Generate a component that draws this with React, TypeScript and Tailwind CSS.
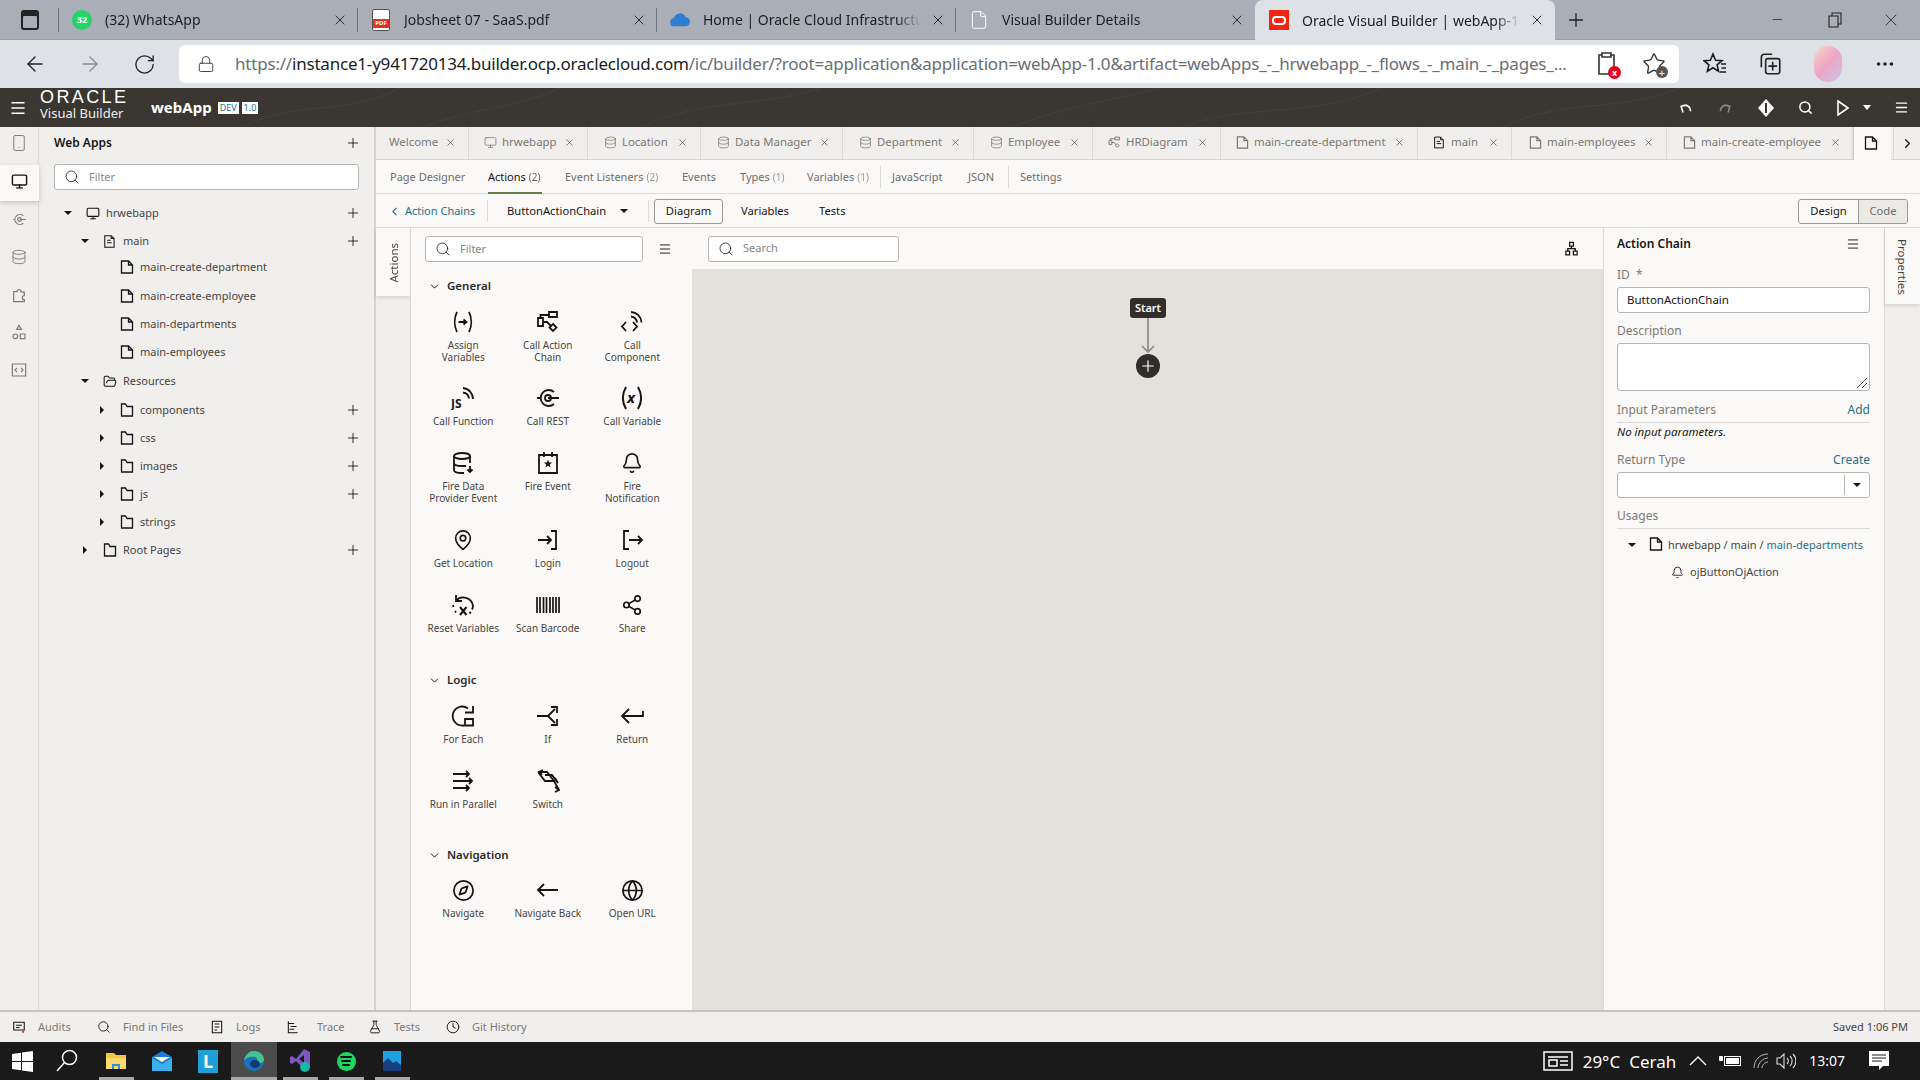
import type { ReactNode } from "react";
import {
  ArrowLeft,
  ArrowRight,
  Bell,
  ChevronDown,
  ChevronLeft,
  ChevronRight,
  Clock,
  Compass,
  Database,
  Ellipsis,
  File,
  FlaskConical,
  FolderOpen,
  Globe,
  Lock,
  MapPin,
  Menu,
  Minus,
  Monitor,
  Plus,
  RotateCw,
  Search,
  Share2,
  Smartphone,
  Star,
  X,
} from "lucide-react";

function Svg({ size = 24, children, className = "" }: { size?: number; children: ReactNode; className?: string }) {
  return (
    <svg
      width={size}
      height={size}
      viewBox="0 0 24 24"
      fill="none"
      stroke="currentColor"
      strokeWidth="1.8"
      className={className}
    >
      {children}
    </svg>
  );
}

function Caret({ dir = "down" }: { dir?: "down" | "right" }) {
  return dir === "down" ? (
    <span className="block h-0 w-0 border-x-[4px] border-t-[4px] border-x-transparent border-t-[#161513]" />
  ) : (
    <span className="block h-0 w-0 border-y-[4px] border-l-[4px] border-y-transparent border-l-[#161513]" />
  );
}

/* palette icons */
const AssignIcon = () => (
  <Svg>
    <path d="M6 2c-3 6-3 14 0 20M18 2c3 6 3 14 0 20M7.500 12h8M12.500 9.500l3 2.500-3 2.500" />
  </Svg>
);
const ChainIcon = () => (
  <Svg>
    <path d="M2 8h5v8H2zM13 2h8v5h-8zM7 5h6M4.500 8V5H7M7 12h4l4 4" />
    <path d="M17 14l3.500 3.500L17 21l-3.500-3.500z" />
  </Svg>
);
const ComponentIcon = () => (
  <Svg>
    <path d="M6 12l-4 4.500L6 21M13 12l4 4.500-4 4.500M11 2a11 11 0 0 1 10.500 10.500M11 6.500a7 7 0 0 1 6 6" />
  </Svg>
);
const FunctionIcon = () => (
  <Svg>
    <path d="M12 2a11 11 0 0 1 10 11M12 6.500a7 7 0 0 1 6 6" />
    <text x="0" y="22" fontSize="12" fontWeight="700" fill="currentColor" stroke="none" fontFamily="Noto Sans">
      JS
    </text>
  </Svg>
);
const RestIcon = () => (
  <Svg>
    <path d="M18 6a8 8 0 1 0 0 12M1 12h3M12 12h11" />
    <circle cx="12" cy="12" r="3" />
  </Svg>
);
const VariableIcon = () => (
  <Svg>
    <path d="M6 1c-4 7-4 15 0 22M18 1c4 7 4 15 0 22" strokeWidth="2" />
    <text x="7" y="17" fontSize="15" fontWeight="700" fontStyle="italic" fill="currentColor" stroke="none" fontFamily="Noto Sans">
      x
    </text>
  </Svg>
);
const DataEventIcon = () => (
  <Svg>
    <ellipse cx="11" cy="5" rx="8" ry="3" />
    <path d="M3 5v14c0 2 3 3 8 3h2M19 5v7M3 12c0 2 4 3 8 3h4M19 15v6M16.500 18.500l2.500 2.500 2.500-2.500" />
  </Svg>
);
const FireEventIcon = () => (
  <Svg>
    <path d="M3 4h18v18H3zM8 1v5M16 1v5" />
    <path d="M12 8.500l1.100 2.900 3 .2-2.300 1.900.8 3-2.600-1.700-2.600 1.700.8-3-2.300-1.900 3-.2z" fill="currentColor" stroke="none" />
  </Svg>
);
const LoginIcon = () => (
  <Svg>
    <path d="M15 3h5v18h-5M2 12h13M11 8l4 4-4 4" />
  </Svg>
);
const LogoutIcon = () => (
  <Svg>
    <path d="M9 3H4v18h5M9 12h13M18 8l4 4-4 4" />
  </Svg>
);
const ResetIcon = () => (
  <Svg>
    <path d="M5 2v6h6M5 7.500a10 10 0 0 1 17 5c0 2-.5 3-1 4M2 12l.5 2M4 18l1 1.500M20 19l-1.500 1.500" />
    <path d="M9 14l6.500 8M15.500 14L9 22" strokeWidth="2" />
  </Svg>
);
const BarcodeIcon = () => (
  <Svg>
    <path d="M1 4v16M4 4v16M7.500 4v16M10.500 4v16M14 4v16M17 4v16M20 4v16M23 4v16" strokeWidth="1.700" />
  </Svg>
);
const ForEachIcon = () => (
  <Svg>
    <path d="M17 4.500A9.500 9.500 0 1 0 12 21.500h1M14 8.500h8V2M14 15h8v6.500h-8z" />
  </Svg>
);
const IfIcon = () => (
  <Svg>
    <path d="M1 12h11M12 12l7-7M12 12l7 7M15 3h6v6M15 21h6v-6" />
  </Svg>
);
const ReturnIcon = () => (
  <Svg>
    <path d="M23 7v5H2M9 5l-7 7 7 7" />
  </Svg>
);
const ParallelIcon = () => (
  <Svg>
    <path d="M2 5h16M2 12h19M2 19h16M15 2l3 3-3 3M18 9l3 3-3 3M15 16l3 3-3 3" />
  </Svg>
);
const SwitchIcon = () => (
  <Svg>
    <path d="M2 3h9l7 9M7 1L3 3l3 3M2 3l7 9h9l5 9M9 6h7l6 8M19 18l4 3-4 2M19 9l3 5" />
  </Svg>
);
const BackIcon = () => (
  <Svg>
    <path d="M2 12h20M8 6l-6 6 6 6" />
  </Svg>
);

function TreeIcon({ size = 15 }: { size?: number }) {
  return (
    <Svg size={size} className="text-[#161513]">
      <path d="M9 2h6v6H9zM3 16h6v6H3zM15 16h6v6h-6zM12 8v4M6 16v-4h12v4" strokeWidth="2" />
    </Svg>
  );
}

function PageIcon({ size = 14, className = "" }: { size?: number; className?: string }) {
  return (
    <svg width={size} height={size} viewBox="0 0 14 14" fill="none" stroke="currentColor" strokeWidth="1.3" className={className}>
      <path d="M1.500 1h7l4 4v8h-11zM8.500 1v4h4" />
    </svg>
  );
}

function FolderIcon({ size = 14 }: { size?: number }) {
  return (
    <svg width={size} height={size} viewBox="0 0 14 14" fill="none" stroke="currentColor" strokeWidth="1.3">
      <path d="M1.500 1h4l1.500 2.500h5.500V13h-11z" />
    </svg>
  );
}

function DocIcon({ size = 14 }: { size?: number }) {
  return (
    <Svg size={size} className="text-[#161513]">
      <path d="M3 2h11l5 5v15H3zM14 2v5h5M7 10h6M7 14h8" />
    </Svg>
  );
}

/* browser top */
function BrowserTab({
  icon,
  title,
  active = false,
  last = false,
}: {
  icon: ReactNode;
  title: string;
  active?: boolean;
  last?: boolean;
}) {
  return (
    <div
      className={
        active
          ? "flex h-[40px] w-[300px] items-center rounded-t-lg bg-[#dee1e6] pl-[14px] pr-[10px]"
          : "relative flex h-[39px] w-[299px] items-center pl-[13px] pr-[10px]"
      }
    >
      <span className="flex w-[20px] shrink-0 justify-center">{icon}</span>
      <span className="ml-[13px] min-w-0 flex-1 overflow-hidden whitespace-nowrap text-[14px] text-[#1d1e20] [mask-image:linear-gradient(90deg,#000_88%,transparent)]">
        {title}
      </span>
      <X size={16} strokeWidth={1.4} className="ml-[8px] shrink-0 text-[#222]" />
      {!active && !last && <span className="absolute right-0 top-[8px] h-[24px] w-px bg-[#70747a]" />}
    </div>
  );
}

function BrowserChrome() {
  return (
    <>
      <div className="flex h-[40px] items-start border-b border-[#9a9ea5] bg-[#aaafb7]">
        <div className="relative flex h-[39px] w-[59px] items-center justify-center">
          <div className="h-[20px] w-[18px] rounded-[3px] border-2 border-[#222] bg-[#aaafb7] shadow-[inset_0_4px_0_#222]" />
          <span className="absolute right-0 top-[8px] h-[24px] w-px bg-[#70747a]" />
        </div>
        <BrowserTab
          title="(32) WhatsApp"
          icon={
            <span className="flex h-[20px] w-[20px] items-center justify-center rounded-full bg-[#25d366] text-[9px] font-bold text-white">
              32
            </span>
          }
        />
        <BrowserTab
          title="Jobsheet 07 - SaaS.pdf"
          icon={
            <span className="flex h-[22px] w-[18px] items-end justify-center rounded-[2px] border border-[#555] bg-white pb-[2px]">
              <span className="w-full bg-[#e0312b] text-center text-[6px] font-bold leading-[9px] text-white">PDF</span>
            </span>
          }
        />
        <BrowserTab
          title="Home | Oracle Cloud Infrastructure"
          icon={
            <svg width="22" height="16" viewBox="0 0 22 16">
              <path d="M5 15a4.500 4.500 0 0 1-.5-9A6.500 6.500 0 0 1 17 5a5 5 0 0 1 0 10z" fill="#2d7dd2" />
            </svg>
          }
        />
        <BrowserTab
          title="Visual Builder Details"
          last
          icon={<File size={22} strokeWidth={1.2} className="text-white" />}
        />
        <BrowserTab
          title="Oracle Visual Builder | webApp-1.0"
          active
          icon={
            <span className="flex h-[20px] w-[20px] items-center justify-center bg-[#f0260f]">
              <span className="h-[9px] w-[14px] rounded-[4px] border-2 border-white" />
            </span>
          }
        />
        <Plus size={22} strokeWidth={1.4} className="ml-[10px] mt-[9px] text-[#222]" />
        <div className="ml-auto flex h-[39px] items-center text-[#222]">
          <Minus size={15} strokeWidth={1.2} className="mr-[43px]" />
          <svg width="14" height="16" viewBox="0 0 14 16" fill="none" stroke="currentColor" strokeWidth="1.1" className="mr-[39px]">
            <path d="M1 4h9v11H1zM4 4V1h9v11h-3" />
          </svg>
          <X size={20} strokeWidth={1} className="mr-[19px]" />
        </div>
      </div>
      <div className="flex h-[48px] items-center bg-[#dee1e6]">
        <ArrowLeft size={24} strokeWidth={1.4} className="ml-[23px] text-[#222]" />
        <ArrowRight size={24} strokeWidth={1.4} className="ml-[31px] text-[#8a8c90]" />
        <RotateCw size={23} strokeWidth={1.4} className="ml-[31px] text-[#222]" />
        <div className="ml-[23px] flex h-[38px] w-[1500px] items-center rounded-md bg-white pl-[18px]">
          <Lock size={18} strokeWidth={1.3} className="text-[#444]" />
          <div className="ml-[20px] w-[1340px] truncate text-[17px] tracking-[-0.2px] text-[#6b6e72]">
            https://<span className="text-[#1b1c1e]">instance1-y941720134.builder.ocp.oraclecloud.com</span>
            /ic/builder/?root=application&application=webApp-1.0&artifact=webApps_-_hrwebapp_-_flows_-_main_-_pages_...
          </div>
          <div className="relative ml-[21px] text-[#333]">
            <svg width="22" height="26" viewBox="0 0 22 26" fill="none" stroke="currentColor" strokeWidth="1.6">
              <path d="M6 4H3v19h15V4h-3M6 2h9v4H6z" />
            </svg>
            <span className="absolute bottom-[-2px] right-[-3px] flex h-[13px] w-[13px] items-center justify-center rounded-full bg-[#e3001b] text-[9px] font-bold leading-none text-white">
              x
            </span>
          </div>
          <div className="relative ml-[24px] text-[#333]">
            <Star size={24} strokeWidth={1.4} />
            <span className="absolute bottom-[-2px] right-[-2px] flex h-[12px] w-[12px] items-center justify-center rounded-full bg-[#555] text-[11px] leading-none text-white">
              +
            </span>
          </div>
        </div>
        <svg width="24" height="24" viewBox="0 0 24 24" fill="none" stroke="#1d1d1d" strokeWidth="1.6" className="ml-[24px]">
          <path d="M10 2l2.600 6.200 6.400.5-4.900 4.200 1.500 6.300L10 15.800l-5.600 3.400 1.500-6.300L1 8.700l6.400-.5zM18 12h5M18.500 16h4.500M17 20h6" />
        </svg>
        <svg width="26" height="26" viewBox="0 0 24 24" fill="none" stroke="#222" strokeWidth="1.5" className="ml-[30px]">
          <path d="M4 15V6a3 3 0 0 1 3-3h7M8 9a2 2 0 0 1 2-2h9a2 2 0 0 1 2 2v10a2 2 0 0 1-2 2h-9a2 2 0 0 1-2-2zM14.500 10v8M10.500 14h8" />
        </svg>
        <div className="ml-[31px] h-[36px] w-[28px] rounded-full bg-[linear-gradient(135deg,#f7d6c4,#eda5c5_50%,#c7c5ec)]" />
        <Ellipsis size={22} className="ml-[32px] text-[#222]" />
      </div>
    </>
  );
}

function AppHeader() {
  return (
    <div className="relative flex h-[39px] items-center overflow-hidden bg-[#3a3632] text-white">
      <svg width="1920" height="39" className="absolute left-0 top-0 opacity-[0.12]" fill="none" stroke="#8a8378">
        <path d="M240 40C300 10 340 30 400 0M420 40C470 20 520 20 560 0M640 40C700 10 760 20 820 0M1010 40C1060 20 1100 15 1160 0M1180 40C1240 15 1320 30 1380 0M1500 40C1560 10 1620 25 1680 0" />
      </svg>
      <Menu size={18} strokeWidth={2} className="relative ml-[9px]" />
      <div className="relative mb-[4px] ml-[13px] w-[90px]">
        <div className="whitespace-nowrap text-[18px] font-light leading-[15px] tracking-[2.4px] [font-family:'Liberation_Sans',sans-serif]">ORACLE</div>
        <div className="text-[13px] leading-[17px] text-[#eee]">Visual Builder</div>
      </div>
      <div className="relative ml-[21px] text-[15px] font-bold">webApp</div>
      <span className="relative ml-[6px] bg-white px-[2px] text-[9px] leading-[12px] text-[#2a6f87]">DEV</span>
      <span className="relative ml-[3px] bg-white px-[2px] text-[9px] leading-[12px] text-[#2a6f87]">1.0</span>
      <div className="relative ml-auto flex items-center">
        <Svg size={15} className="text-white">
          <path d="M8 20l-3-10 10-2M6 10a9 9 0 0 1 14 8" strokeWidth="2.500" />
        </Svg>
        <Svg size={15} className="ml-[25px] text-[#8d8a85]">
          <path d="M16 20l3-10-10-2M18 10A9 9 0 0 0 4 18" strokeWidth="2.500" />
        </Svg>
        <svg width="16" height="18" viewBox="0 0 16 18" className="ml-[25px]">
          <path d="M8 0l8 9-8 9-8-9z" fill="#fff" />
          <path d="M8 4v10" stroke="#3a3632" strokeWidth="2" />
        </svg>
        <Search size={15} strokeWidth={2.4} className="ml-[24px]" />
        <svg width="14" height="16" viewBox="0 0 14 16" fill="none" stroke="#fff" strokeWidth="1.6" className="ml-[23px]">
          <path d="M2 1l10 7-10 7z" />
        </svg>
        <span className="ml-[13px] h-0 w-0 border-x-[4px] border-t-[5px] border-x-transparent border-t-white" />
        <Menu size={15} strokeWidth={2.2} className="ml-[23px] mr-[11px]" />
      </div>
    </div>
  );
}

/* left column */
function Rail() {
  const iconCls = "text-[#7d7c79]";
  return (
    <div className="flex w-[39px] shrink-0 flex-col border-r border-[#dcdad8] bg-[#f1efed]">
      <div className="flex h-[32px] items-center justify-center">
        <Smartphone size={18} strokeWidth={1.3} className={iconCls} />
      </div>
      <div className="z-10 mr-[-1px] mt-[6px] flex h-[36px] items-center justify-center bg-[#fbf9f8] pb-[4px] shadow-[0_2px_5px_rgba(0,0,0,0.18)]">
        <Monitor size={17} strokeWidth={2} className="text-[#161513]" />
      </div>
      <div className="flex h-[37.5px] items-center justify-center">
        <Svg size={15} className={iconCls}>
          <path d="M18 6a8 8 0 1 0 0 12M2 12h2M12 12h10" />
          <circle cx="12" cy="12" r="3" />
        </Svg>
      </div>
      <div className="flex h-[37.5px] items-center justify-center">
        <Database size={16} strokeWidth={1.4} className={iconCls} />
      </div>
      <div className="flex h-[37.5px] items-center justify-center">
        <Svg size={16} className={iconCls}>
          <path d="M4 7h5a3 3 0 0 1 6 0l5 1v5a3 3 0 0 0 0 6v3H4z" />
        </Svg>
      </div>
      <div className="flex h-[37.5px] items-center justify-center">
        <Svg size={16} className={iconCls}>
          <path d="M12 2l3.500 6h-7zM14 15h7v7h-7z" />
          <circle cx="6.5" cy="18.5" r="3.5" />
        </Svg>
      </div>
      <div className="flex h-[37.5px] items-center justify-center">
        <Svg size={16} className={iconCls}>
          <path d="M2 3h20v18H2zM9 9l-3 3 3 3M15 9l3 3-3 3" />
        </Svg>
      </div>
    </div>
  );
}

type TreeRow = {
  label: string;
  level: "a" | "b" | "c";
  caret?: "down" | "right";
  icon: "monitor" | "doc" | "page" | "open" | "folder";
  add?: boolean;
  extra?: string;
};

const treeRows: TreeRow[] = [
  { label: "hrwebapp", level: "a", caret: "down", icon: "monitor", add: true },
  { label: "main", level: "b", caret: "down", icon: "doc", add: true },
  { label: "main-create-department", level: "c", icon: "page", extra: "-mt-[2px]" },
  { label: "main-create-employee", level: "c", icon: "page", extra: "mt-[1px]" },
  { label: "main-departments", level: "c", icon: "page" },
  { label: "main-employees", level: "c", icon: "page" },
  { label: "Resources", level: "b", caret: "down", icon: "open", extra: "mt-[1px]" },
  { label: "components", level: "c", caret: "right", icon: "folder", add: true, extra: "mt-[1px]" },
  { label: "css", level: "c", caret: "right", icon: "folder", add: true },
  { label: "images", level: "c", caret: "right", icon: "folder", add: true },
  { label: "js", level: "c", caret: "right", icon: "folder", add: true },
  { label: "strings", level: "c", caret: "right", icon: "folder" },
  { label: "Root Pages", level: "b", caret: "right", icon: "folder", add: true },
];

function TreeGlyph({ icon }: { icon: TreeRow["icon"] }) {
  if (icon === "monitor") return <Monitor size={15} strokeWidth={1.9} />;
  if (icon === "doc") return <DocIcon size={15} />;
  if (icon === "page") return <PageIcon size={14} />;
  if (icon === "open") return <FolderOpen size={15} strokeWidth={1.8} />;
  return <FolderIcon size={14} />;
}

function Explorer() {
  const indent = { a: "pl-[10px]", b: "pl-[27px]", c: "pl-[44px]" };
  return (
    <div className="w-[337px] shrink-0 border-r-2 border-[#d4d2d0] bg-[#f1efed] pl-[15px] pr-[13px]">
      <div className="flex h-[32px] items-center justify-between">
        <span className="text-[12px] font-semibold text-[#161513]">Web Apps</span>
        <Plus size={16} strokeWidth={1.3} className="text-[#161513]" />
      </div>
      <SearchBox placeholder="Filter" className="mt-[5px] h-[26px] w-[305px]" />
      <div className="mt-[9px]">
        {treeRows.map((r) => (
          <div key={r.label} className={`flex h-[28px] items-center ${indent[r.level]} ${r.extra ?? ""}`}>
            <span className="flex w-[22px] shrink-0">
              <span className="flex w-[8px] justify-center">{r.caret && <Caret dir={r.caret} />}</span>
            </span>
            <span className="flex w-[14px] shrink-0 text-[#161513]">
              <TreeGlyph icon={r.icon} />
            </span>
            <span className="ml-[6px] text-[11px] text-[#47453f]">{r.label}</span>
            {r.add && <Plus size={16} strokeWidth={1.3} className="ml-auto text-[#161513]" />}
          </div>
        ))}
      </div>
    </div>
  );
}

function SearchBox({ placeholder, className }: { placeholder: string; className: string }) {
  return (
    <div className={`flex items-center rounded-[3px] border border-[#b8b6b3] bg-white pl-[9px] ${className}`}>
      <Search size={16} strokeWidth={1.2} className="text-[#161513]" />
      <span className="ml-[9px] text-[11px] text-[#88867f]">{placeholder}</span>
    </div>
  );
}

/* tabs */
const editorTabs = [
  { label: "Welcome", w: "w-[93px]", pl: "pl-[13px]", icon: null },
  { label: "hrwebapp", w: "w-[119px]", pl: "pl-[15px]", icon: <Monitor size={13} strokeWidth={1.4} /> },
  { label: "Location", w: "w-[113px]", pl: "pl-[16px]", icon: <Database size={13} strokeWidth={1.4} /> },
  { label: "Data Manager", w: "w-[142px]", pl: "pl-[16px]", icon: <Database size={13} strokeWidth={1.4} /> },
  { label: "Department", w: "w-[131px]", pl: "pl-[16px]", icon: <Database size={13} strokeWidth={1.4} /> },
  { label: "Employee", w: "w-[119px]", pl: "pl-[16px]", icon: <Database size={13} strokeWidth={1.4} /> },
  { label: "HRDiagram", w: "w-[128px]", pl: "pl-[15px]", icon: <ChainIcon /> },
  { label: "main-create-department", w: "w-[197px]", pl: "pl-[15px]", icon: <PageIcon size={13} /> },
  { label: "main", w: "w-[94px]", pl: "pl-[15px]", icon: <DocIcon size={13} /> },
  { label: "main-employees", w: "w-[155px]", pl: "pl-[17px]", icon: <PageIcon size={13} /> },
  { label: "main-create-employee", w: "w-[187px]", pl: "pl-[16px]", icon: <PageIcon size={13} /> },
];

function EditorTabs() {
  return (
    <div className="flex h-[33px] shrink-0 border-b border-[#d9d7d5] bg-[#f1efed]">
      {editorTabs.map((t) => (
        <div
          key={t.label}
          className={`flex h-full shrink-0 items-center border-r border-[#dcdad8] pb-[2px] pr-[12px] text-[#7b7974] ${t.w} ${t.pl}`}
        >
          {t.icon && (
            <span className="mr-[5px] flex h-[13px] w-[13px] shrink-0 items-center justify-center overflow-hidden [&>svg]:h-[13px] [&>svg]:w-[13px]">
              {t.icon}
            </span>
          )}
          <span className="whitespace-nowrap text-[11.4px]">{t.label}</span>
          <X size={11} strokeWidth={1.6} className="ml-auto text-[#55534f]" />
        </div>
      ))}
      <div className="flex h-[33px] w-[37px] shrink-0 items-center bg-[#fbf9f8] pb-[2px] pl-[10px] shadow-[-2px_0_3px_rgba(0,0,0,0.1)]">
        <PageIcon size={14} className="text-[#161513]" />
      </div>
      <div className="ml-[2px] flex flex-1 items-center justify-center border-l border-[#dcdad8]">
        <ChevronRight size={15} strokeWidth={2} className="text-[#161513]" />
      </div>
    </div>
  );
}

const subTabs = [
  { label: "Page Designer", count: "", w: "w-[98px]" },
  { label: "Actions", count: "(2)", w: "w-[77px]", active: true },
  { label: "Event Listeners", count: "(2)", w: "w-[117px]" },
  { label: "Events", count: "", w: "w-[58px]" },
  { label: "Types", count: "(1)", w: "w-[67px]" },
  { label: "Variables", count: "(1)", w: "w-[73px]" },
];

function SubTabs() {
  return (
    <div className="flex h-[34px] shrink-0 items-stretch border-b border-[#e0dedc] bg-[#fbf9f8] pl-[14px] pt-[1px] text-[11px] text-[#6f6d68]">
      {subTabs.map((t) => (
        <div key={t.label} className={`relative flex items-center whitespace-nowrap ${t.w} ${t.active ? "text-[#161513]" : ""}`}>
          {t.label}
          {t.count && <span className="ml-[3px] text-[10px] opacity-70">{t.count}</span>}
          {t.active && <span className="absolute bottom-[-1px] left-0 h-[2px] w-[54px] bg-[#5f7d4f]" />}
        </div>
      ))}
      <span className="my-[5px] w-px bg-[#dcdad8]" />
      <div className="ml-[11px] flex w-[76px] items-center">JavaScript</div>
      <div className="flex w-[40px] items-center">JSON</div>
      <span className="my-[5px] w-px bg-[#dcdad8]" />
      <div className="ml-[11px] flex items-center">Settings</div>
    </div>
  );
}

function ChainBar() {
  return (
    <div className="flex h-[34px] shrink-0 items-center border-b border-[#e0dedc] bg-[#fbf9f8] pt-[1px] text-[11.2px]">
      <ChevronLeft size={13} strokeWidth={2} className="ml-[12px] text-[#2a6f87]" />
      <span className="ml-[4px] w-[70px] whitespace-nowrap text-[11px] text-[#2a6f87]">Action Chains</span>
      <span className="ml-[12px] h-[22px] w-px bg-[#dcdad8]" />
      <span className="ml-[19px] w-[102px] whitespace-nowrap text-[#161513]">ButtonActionChain</span>
      <span className="ml-[11px]">
        <Caret />
      </span>
      <span className="ml-[20px] h-[22px] w-px bg-[#dcdad8]" />
      <span className="ml-[5px] flex h-[25px] w-[69px] items-center justify-center rounded-[3px] border border-[#9c9a97] text-[#161513]">
        Diagram
      </span>
      <span className="ml-[18px] w-[48px] text-[#161513]">Variables</span>
      <span className="ml-[30px] text-[#161513]">Tests</span>
      <div className="ml-auto mr-[12px] flex h-[25px] w-[110px] overflow-hidden rounded-[3px] border border-[#9c9a97]">
        <span className="flex w-[60px] items-center justify-center border-r border-[#9c9a97] text-[#161513]">Design</span>
        <span className="flex flex-1 items-center justify-center bg-[#eceae7] text-[#6f6d68]">Code</span>
      </div>
    </div>
  );
}

/* palette */
type PaletteItem = { label: string; icon: ReactNode };

const generalItems: PaletteItem[] = [
  { label: "Assign\nVariables", icon: <AssignIcon /> },
  { label: "Call Action\nChain", icon: <ChainIcon /> },
  { label: "Call\nComponent", icon: <ComponentIcon /> },
  { label: "Call Function", icon: <FunctionIcon /> },
  { label: "Call REST", icon: <RestIcon /> },
  { label: "Call Variable", icon: <VariableIcon /> },
  { label: "Fire Data\nProvider Event", icon: <DataEventIcon /> },
  { label: "Fire Event", icon: <FireEventIcon /> },
  { label: "Fire\nNotification", icon: <Bell size={22} strokeWidth={1.8} /> },
  { label: "Get Location", icon: <MapPin size={22} strokeWidth={1.8} /> },
  { label: "Login", icon: <LoginIcon /> },
  { label: "Logout", icon: <LogoutIcon /> },
  { label: "Reset Variables", icon: <ResetIcon /> },
  { label: "Scan Barcode", icon: <BarcodeIcon /> },
  { label: "Share", icon: <Share2 size={22} strokeWidth={1.8} /> },
];

const logicItems: PaletteItem[] = [
  { label: "For Each", icon: <ForEachIcon /> },
  { label: "If", icon: <IfIcon /> },
  { label: "Return", icon: <ReturnIcon /> },
  { label: "Run in Parallel", icon: <ParallelIcon /> },
  { label: "Switch", icon: <SwitchIcon /> },
];

const navItems: PaletteItem[] = [
  { label: "Navigate", icon: <Compass size={23} strokeWidth={1.8} /> },
  { label: "Navigate Back", icon: <BackIcon /> },
  { label: "Open URL", icon: <Globe size={23} strokeWidth={1.8} /> },
];

function PaletteGrid({ items, rows }: { items: PaletteItem[]; rows: string }) {
  return (
    <div className={`ml-[-4px] grid w-[253.5px] grid-cols-3 ${rows}`}>
      {items.map((it) => (
        <div key={it.label} className="flex flex-col items-center">
          <div className="flex h-[28px] items-center text-[#161513]">{it.icon}</div>
          <div className="mt-[3px] whitespace-pre-line text-center text-[10px] leading-[12px] text-[#47453f]">{it.label}</div>
        </div>
      ))}
    </div>
  );
}

function SectionHead({ title, className }: { title: string; className: string }) {
  return (
    <div className={`flex h-[20px] items-center ${className}`}>
      <ChevronDown size={13} strokeWidth={1.8} className="text-[#161513]" />
      <span className="ml-[6px] text-[11.5px] font-semibold text-[#2c2a28]">{title}</span>
    </div>
  );
}

function Palette() {
  return (
    <>
      <div className="flex w-[34px] shrink-0 flex-col bg-[#f1efed]">
        <div className="flex h-[68px] justify-center bg-[#fbf9f8] pl-[2px] pt-[15px] shadow-[0_2px_4px_rgba(0,0,0,0.12)]">
          <span className="h-fit rotate-180 text-[11.5px] leading-none text-[#47453f] [writing-mode:vertical-rl]">Actions</span>
        </div>
      </div>
      <div className="w-[282px] shrink-0 border-l border-[#d9d7d5] bg-[#fbf9f8] pl-[14px] shadow-[1px_0_2px_rgba(0,0,0,0.08)]">
        <div className="mt-[8px] flex items-center">
          <SearchBox placeholder="Filter" className="h-[26px] w-[218px]" />
          <Menu size={14} strokeWidth={1.6} className="ml-[15px] text-[#161513]" />
        </div>
        <SectionHead title="General" className="mt-[14px] pl-[3px]" />
        <div className="mt-[12px]">
          <PaletteGrid items={generalItems} rows="grid-rows-[76px_65px_77px_65px_65px]" />
        </div>
        <SectionHead title="Logic" className="mt-[14px] pl-[3px]" />
        <div className="mt-[12px]">
          <PaletteGrid items={logicItems} rows="grid-rows-[65px_64px]" />
        </div>
        <SectionHead title="Navigation" className="mt-[14px] pl-[3px]" />
        <div className="mt-[11px]">
          <PaletteGrid items={navItems} rows="grid-rows-[64px]" />
        </div>
      </div>
    </>
  );
}

function Canvas() {
  return (
    <div className="flex min-w-0 flex-1 flex-col">
      <div className="flex h-[41px] shrink-0 items-center bg-[#fbf9f8] pl-[16px] pr-[24px]">
        <SearchBox placeholder="Search" className="h-[26px] w-[191px]" />
        <span className="ml-auto">
          <TreeIcon />
        </span>
      </div>
      <div className="relative flex-1 bg-[#e4e1dc]">
        <div className="absolute left-[438px] top-[29px] flex w-[36px] flex-col items-center">
          <div className="flex h-[20px] w-[36px] items-center justify-center rounded-[3px] bg-[#312d2a] text-[11px] font-semibold text-white">
            Start
          </div>
          <svg width="14" height="36" viewBox="0 0 14 36" fill="none" stroke="#8e8b86" strokeWidth="1.7">
            <path d="M7 0v34M1 28l6 6 6-6" />
          </svg>
          <div className="flex h-[24px] w-[24px] items-center justify-center rounded-full bg-[#312d2a]">
            <Plus size={18} strokeWidth={1.6} className="text-white" />
          </div>
        </div>
      </div>
    </div>
  );
}

function Properties() {
  const label = "text-[12px] leading-[16px] text-[#7b7974]";
  const field = "rounded-[3px] border border-[#b8b6b3] bg-white";
  return (
    <>
      <div className="w-[282px] shrink-0 border-x border-[#dcdad8] bg-[#fbf9f8] pl-[13px] pr-[14px]">
        <div className="flex h-[32px] items-center justify-between pr-[10px]">
          <span className="text-[12px] font-semibold text-[#161513]">Action Chain</span>
          <Menu size={14} strokeWidth={1.6} className="text-[#161513]" />
        </div>
        <div className={`mt-[7px] ${label}`}>ID&nbsp; *</div>
        <div className={`mt-[4px] flex h-[26px] items-center pl-[9px] text-[11.5px] text-[#161513] ${field}`}>ButtonActionChain</div>
        <div className={`mt-[10px] ${label}`}>Description</div>
        <div className={`relative mt-[4px] h-[48px] ${field}`}>
          <svg width="12" height="12" viewBox="0 0 12 12" stroke="#555" className="absolute bottom-[1px] right-[1px]">
            <path d="M1 11L11 1M6 11l5-5" />
          </svg>
        </div>
        <div className={`mt-[11px] flex justify-between border-b border-[#dcdad8] pb-[4px] ${label}`}>
          <span>Input Parameters</span>
          <span className="text-[#2a6f87]">Add</span>
        </div>
        <div className="mt-[1px] text-[11.5px] italic leading-[16px] text-[#161513]">No input parameters.</div>
        <div className={`mt-[12px] flex justify-between ${label}`}>
          <span>Return Type</span>
          <span className="text-[#2a6f87]">Create</span>
        </div>
        <div className={`mt-[4px] flex h-[26px] items-center justify-end ${field}`}>
          <span className="flex h-[20px] w-[25px] items-center justify-center border-l border-[#b8b6b3]">
            <Caret />
          </span>
        </div>
        <div className={`mt-[10px] border-b border-[#dcdad8] pb-[4px] ${label}`}>Usages</div>
        <div className="mt-[8px] flex h-[16px] items-center pl-[11px] text-[11px] text-[#47453f]">
          <Caret />
          <PageIcon size={14} className="ml-[13px] mt-[-3px] text-[#161513]" />
          <span className="ml-[5px] whitespace-nowrap">
            hrwebapp / main / <span className="text-[#2a6f87]">main-departments</span>
          </span>
        </div>
        <div className="mt-[11px] flex h-[16px] items-center pl-[54px] text-[11px] text-[#47453f]">
          <Bell size={13} strokeWidth={1.6} className="text-[#161513]" />
          <span className="ml-[6px]">ojButtonOjAction</span>
        </div>
      </div>
      <div className="flex w-[35px] shrink-0 flex-col bg-[#f1efed]">
        <div className="flex h-[76px] justify-center bg-[#fbf9f8] pt-[11px] shadow-[0_2px_4px_rgba(0,0,0,0.12)]">
          <span className="h-fit text-[11.5px] leading-none text-[#47453f] [writing-mode:vertical-rl]">Properties</span>
        </div>
      </div>
    </>
  );
}

function StatusBar() {
  const items = [
    { label: "Audits", w: "w-[85px]", gap: "ml-[12px]", icon: <Svg size={14}><path d="M3 4h18v13H3zM7 9h10M7 13h6" /><circle cx="19" cy="20" r="2" fill="#c74634" stroke="none" /></Svg> },
    { label: "Find in Files", w: "w-[113px]", gap: "ml-[12px]", icon: <Search size={14} strokeWidth={1.5} /> },
    { label: "Logs", w: "w-[76px]", gap: "ml-[12px]", icon: <Svg size={14}><path d="M4 2h16v20H4zM8 7h8M8 12h8M8 17h4" /></Svg> },
    { label: "Trace", w: "w-[82px]", gap: "ml-[17px]", icon: <Svg size={14}><path d="M4 2v20h16M4 6h10M8 11h10M6 16h8" /></Svg> },
    { label: "Tests", w: "w-[78px]", gap: "ml-[12px]", icon: <FlaskConical size={14} strokeWidth={1.6} /> },
    { label: "Git History", w: "w-[90px]", gap: "ml-[12px]", icon: <Clock size={14} strokeWidth={1.6} /> },
  ];
  return (
    <div className="flex h-[32px] shrink-0 items-center border-t-2 border-[#c6c4c1] bg-[#f1efed] pl-[12px] pr-[12px] text-[11px] text-[#7b7974]">
      {items.map((it) => (
        <div key={it.label} className={`flex items-center ${it.w}`}>
          <span className="flex w-[14px] text-[#161513]">{it.icon}</span>
          <span className={it.gap}>{it.label}</span>
        </div>
      ))}
      <span className="ml-auto text-[#47453f]">Saved 1:06 PM</span>
    </div>
  );
}

function TaskCell({ children, running = "", active = false }: { children: ReactNode; running?: string; active?: boolean }) {
  return (
    <div className={`relative flex h-[38px] w-[46px] items-center justify-center ${active ? "bg-[#4b4b4b]" : ""}`}>
      {children}
      {running && <span className={`absolute bottom-0 h-[3px] bg-[#a8a8a8] ${running}`} />}
    </div>
  );
}

function Taskbar() {
  return (
    <div className="flex h-[38px] shrink-0 items-center bg-[#1a1a1a] text-white">
      <div className="flex h-[38px] w-[44px] items-center justify-center">
        <svg width="21" height="21" viewBox="0 0 21 21" fill="#fff">
          <path d="M0 3l9-1.300V10H0zM10 1.500L21 0v10H10zM0 11h9v8.300L0 18zM10 11h11v10l-11-1.500z" />
        </svg>
      </div>
      <TaskCell>
        <svg width="22" height="24" viewBox="0 0 22 24" fill="none" stroke="#fff" strokeWidth="1.5">
          <circle cx="13.5" cy="8.5" r="7" />
          <path d="M8.500 13.500L1 22" />
        </svg>
      </TaskCell>
      <div className="ml-[3px]" />
      <TaskCell running="w-[35px]">
        <svg width="20" height="20" viewBox="0 0 20 20">
          <path d="M0 2h8l2 2h10v14H0z" fill="#f4c542" />
          <path d="M0 7h20v11H0z" fill="#fbd96b" />
          <path d="M6 13h8v5h-2v-3H8v3H6z" fill="#2d8fd5" />
        </svg>
      </TaskCell>
      <TaskCell>
        <svg width="20" height="20" viewBox="0 0 20 20">
          <path d="M0 6l10-6 10 6v14H0z" fill="#1d7dd0" />
          <path d="M0 7l10 6 10-6v13H0z" fill="#3cb1ee" />
          <path d="M2 6h16l-8 5z" fill="#fff" />
        </svg>
      </TaskCell>
      <TaskCell>
        <span className="flex h-[23px] w-[20px] items-center justify-center bg-[#1f9fd8] text-[18px] font-bold leading-none text-white">L</span>
      </TaskCell>
      <TaskCell active running="w-[46px]">
        <svg width="22" height="22" viewBox="0 0 22 22">
          <circle cx="11" cy="11" r="10" fill="#1b6fc2" />
          <path d="M1 11C2 4 7 1 11 1c6 0 10 4 10 9-1 4-6 4-8 2 2-1 2-4-1-5C8 6 3 7 1 11z" fill="#43c58d" />
          <ellipse cx="12" cy="14" rx="5" ry="4" fill="#123a70" />
        </svg>
      </TaskCell>
      <TaskCell running="w-[35px]">
        <svg width="20" height="24" viewBox="0 0 20 24">
          <path d="M14 0l6 3v14l-6 3-8-8-4 3-2-1V8l2-1 4 3zM14 6l-5 4 5 4z" fill="#7e57c2" />
          <circle cx="15" cy="18" r="5" fill="#14b8a6" />
        </svg>
      </TaskCell>
      <TaskCell running="w-[35px]">
        <span className="flex h-[19px] w-[19px] flex-col items-center justify-center gap-[2px] rounded-full bg-[#1ed760]">
          <span className="h-[2px] w-[12px] rounded-full bg-[#111]" />
          <span className="h-[2px] w-[10px] rounded-full bg-[#111]" />
          <span className="h-[2px] w-[8px] rounded-full bg-[#111]" />
        </span>
      </TaskCell>
      <TaskCell running="w-[35px]">
        <svg width="18" height="20" viewBox="0 0 18 20">
          <path d="M0 0h18v20H0z" fill="#1fa0e0" />
          <path d="M0 20v-8l5-5 5 5 3-2 5 4v6z" fill="#173f80" />
        </svg>
      </TaskCell>
      <div className="ml-auto flex items-center">
        <svg width="30" height="20" viewBox="0 0 30 20" fill="none" stroke="#fff" strokeWidth="1.5">
          <path d="M1 1h28v18H1zM5 6h20M6 9h8v6H6zM17 10h8M17 14h8" />
        </svg>
        <span className="ml-[10px] text-[17px] leading-none">29°C</span>
        <span className="ml-[9px] text-[17px] leading-none">Cerah</span>
        <svg width="18" height="10" viewBox="0 0 18 10" fill="none" stroke="#fff" strokeWidth="1.3" className="ml-[13px]">
          <path d="M1 9l8-8 8 8" />
        </svg>
        <span className="ml-[12px] flex items-center">
          <span className="mb-[6px] mr-[1px] h-[5px] w-[4px] rounded-[1px] bg-white" />
          <span className="flex h-[10px] w-[17px] items-center border border-white p-px">
            <span className="h-full w-full bg-white" />
          </span>
        </span>
        <svg width="16" height="16" viewBox="0 0 16 16" fill="none" stroke="#bbb" strokeWidth="1" className="ml-[12px]">
          <path d="M1 15C1 7 7 1 15 1M5 15c0-5 5-10 10-10M9 15c0-3 3-6 6-6" />
        </svg>
        <svg width="20" height="16" viewBox="0 0 20 16" fill="none" stroke="#ddd" strokeWidth="1.1" className="ml-[7px]">
          <path d="M1 5h3l4-4v14l-4-4H1zM11 5a4 4 0 0 1 0 6M14 3a7 7 0 0 1 0 10M17 1a10 10 0 0 1 0 14" />
        </svg>
        <span className="ml-[13px] text-[14px] leading-none">13:07</span>
        <svg width="20" height="20" viewBox="0 0 20 20" className="ml-[24px] mr-[31px]">
          <path d="M0 0h20v15h-6l-4 4v-4H0z" fill="#fff" />
          <path d="M3 4h14M3 7h14M3 10h10" stroke="#1a1a1a" strokeWidth="1" />
        </svg>
      </div>
    </div>
  );
}

export default function App() {
  return (
    <div className="flex h-[1080px] w-[1920px] flex-col overflow-hidden bg-[#f1efed] font-['Noto_Sans',sans-serif]">
      <BrowserChrome />
      <AppHeader />
      <div className="flex min-h-0 flex-1">
        <Rail />
        <Explorer />
        <div className="flex min-w-0 flex-1 flex-col">
          <EditorTabs />
          <SubTabs />
          <ChainBar />
          <div className="flex min-h-0 flex-1">
            <Palette />
            <Canvas />
            <Properties />
          </div>
        </div>
      </div>
      <StatusBar />
      <Taskbar />
    </div>
  );
}
